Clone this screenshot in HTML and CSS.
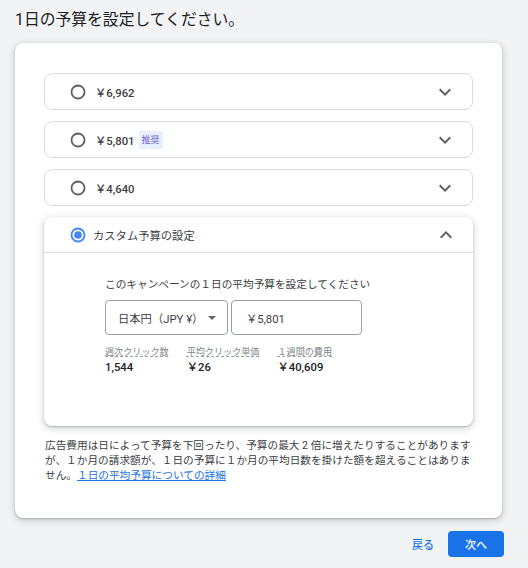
FILE: index.html
```html
<!DOCTYPE html>
<html lang="ja">
<head>
<meta charset="utf-8">
<link rel="stylesheet" href="styles.css">
</head>
<body>
<h1 class="title">1日の予算を設定してください。</h1>
<div class="card">
  <div class="options">
    <div class="option">
      <svg class="radio" viewBox="0 0 16 16"><circle cx="8" cy="8" r="6.5" fill="none" stroke="#5f6368" stroke-width="1.8"/></svg>
      <span class="amount">￥6,962</span>
      <span class="spacer"></span>
      <svg class="chev" viewBox="0 0 24 24"><path d="M16.59 8.59L12 13.17 7.41 8.59 6 10l6 6 6-6z" fill="#5f6368"/></svg>
    </div>
    <div class="option">
      <svg class="radio" viewBox="0 0 16 16"><circle cx="8" cy="8" r="6.5" fill="none" stroke="#5f6368" stroke-width="1.8"/></svg>
      <span class="amount">￥5,801</span>
      <span class="badge">推奨</span>
      <span class="spacer"></span>
      <svg class="chev" viewBox="0 0 24 24"><path d="M16.59 8.59L12 13.17 7.41 8.59 6 10l6 6 6-6z" fill="#5f6368"/></svg>
    </div>
    <div class="option">
      <svg class="radio" viewBox="0 0 16 16"><circle cx="8" cy="8" r="6.5" fill="none" stroke="#5f6368" stroke-width="1.8"/></svg>
      <span class="amount">￥4,640</span>
      <span class="spacer"></span>
      <svg class="chev" viewBox="0 0 24 24"><path d="M16.59 8.59L12 13.17 7.41 8.59 6 10l6 6 6-6z" fill="#5f6368"/></svg>
    </div>
    <div class="panel">
      <div class="panel-head">
        <svg class="radio" viewBox="0 0 16 16"><circle cx="8" cy="8" r="6.5" fill="none" stroke="#4285f4" stroke-width="1.8"/><circle cx="8" cy="8" r="3.8" fill="#4285f4"/></svg>
        <span class="head-label">カスタム予算の設定</span>
        <span class="spacer"></span>
        <svg class="chev" viewBox="0 0 24 24"><path d="M7.41 15.41L12 10.83l4.59 4.58L18 14l-6-6-6 6z" fill="#5f6368"/></svg>
      </div>
      <div class="panel-body">
        <p class="prompt">このキャンペーンの１日の平均予算を設定してください</p>
        <div class="fields">
          <div class="select">
            <span>日本円（JPY ¥）</span>
            <svg class="caret" viewBox="0 0 10 5"><path d="M0 0l5 5 5-5z" fill="#5f6368"/></svg>
          </div>
          <div class="input">￥5,801</div>
        </div>
        <div class="stats">
          <div class="stat">
            <span class="stat-label">週次クリック数</span>
            <span class="stat-value">1,544</span>
          </div>
          <div class="stat">
            <span class="stat-label">平均クリック単価</span>
            <span class="stat-value">￥26</span>
          </div>
          <div class="stat">
            <span class="stat-label">１週間の費用</span>
            <span class="stat-value">￥40,609</span>
          </div>
        </div>
      </div>
    </div>
  </div>
  <p class="note">広告費用は日によって予算を下回ったり、予算の最大 2 倍に増えたりすることがありますが、１か月の請求額が、１日の予算に１か月の平均日数を掛けた額を超えることはありません。<a href="#" class="link">１日の平均予算についての詳細</a></p>
</div>
<div class="actions">
  <a href="#" class="back">戻る</a>
  <button class="next">次へ</button>
</div>
</body>
</html>
```

FILE: styles.css
```css
* { box-sizing: border-box; }
body {
  margin: 0;
  background: #f1f3f4;
  font-family: Roboto, "Noto Sans CJK JP", sans-serif;
  color: #3c4043;
}
.title {
  margin: 0;
  padding: 10px 15px 0;
  font-size: 15.8px;
  line-height: 20px;
  font-weight: 400;
  color: #202124;
}
.card {
  margin: 13px 0 0 15px;
  width: 487px;
  background: #fff;
  border-radius: 8px;
  box-shadow: 0 1px 2px rgba(60,64,67,.3), 0 2px 6px 2px rgba(60,64,67,.15);
  padding: 30px 29px 35px;
}
.options {
  display: flex;
  flex-direction: column;
  gap: 11px;
}
.option {
  display: flex;
  align-items: center;
  height: 37px;
  border: 1px solid #dadce0;
  border-radius: 8px;
  padding: 0 15px 0 25px;
}
.radio { width: 16px; height: 16px; flex: none; }
.amount {
  margin-left: 9px;
  font-size: 11.3px;
  font-weight: 500;
  color: #3c4043;
}
.badge {
  margin-left: 4px;
  background: #e8f0fe;
  color: #6a5fd8;
  font-size: 9px;
  line-height: 18px;
  padding: 0 3px;
  border-radius: 2px;
}
.spacer { flex: 1; }
.chev { width: 24px; height: 24px; flex: none; }
.panel {
  border-radius: 8px;
  box-shadow: 0 1px 2px rgba(60,64,67,.3), 0 2px 6px 2px rgba(60,64,67,.15);
  background: #fff;
}
.panel-head {
  display: flex;
  align-items: center;
  height: 36px;
  padding: 0 15px 0 26px;
  border-bottom: 1px solid #dadce0;
}
.head-label {
  margin-left: 7px;
  font-size: 11.3px;
  color: #3c4043;
}
.panel-body {
  padding: 24px 20px 51px 61px;
}
.prompt {
  margin: 0;
  font-size: 10.67px;
  line-height: 16px;
  color: #3c4043;
}
.fields {
  display: flex;
  gap: 3px;
  margin-top: 7px;
}
.select, .input {
  height: 35px;
  border: 1px solid #9aa0a6;
  border-radius: 4px;
  display: flex;
  align-items: center;
  font-size: 11.3px;
  color: #3c4043;
}
.select {
  width: 123px;
  padding: 0 11px 0 12px;
  justify-content: space-between;
}
.caret { width: 8px; height: 4px; }
.input {
  width: 131px;
  padding: 0 14px;
}
.stats {
  display: flex;
  gap: 18px;
  margin-top: 11px;
}
.stat {
  display: flex;
  flex-direction: column;
  gap: 3px;
}
.stat-label {
  font-size: 9.1px;
  line-height: 12px;
  color: #80868b;
  text-decoration: underline dashed #9aa0a6;
  text-underline-offset: 1px;
}
.stat-value {
  font-size: 11.3px;
  line-height: 14px;
  font-weight: 500;
  color: #202124;
}
.note {
  margin: 12px 0 0 1px;
  font-size: 10.67px;
  line-height: 15px;
  color: #3c4043;
}
.link {
  color: #1a73e8;
  text-decoration: underline;
}
.actions {
  display: flex;
  justify-content: flex-end;
  align-items: center;
  gap: 14px;
  margin-top: 13px;
  padding-right: 24px;
}
.back {
  font-size: 11px;
  color: #1a73e8;
  text-decoration: none;
  font-weight: 500;
}
.next {
  width: 56px;
  height: 26px;
  border: none;
  border-radius: 4px;
  background: #1a73e8;
  color: #fff;
  font-family: inherit;
  font-size: 11px;
  font-weight: 500;
  padding: 0;
}
```
